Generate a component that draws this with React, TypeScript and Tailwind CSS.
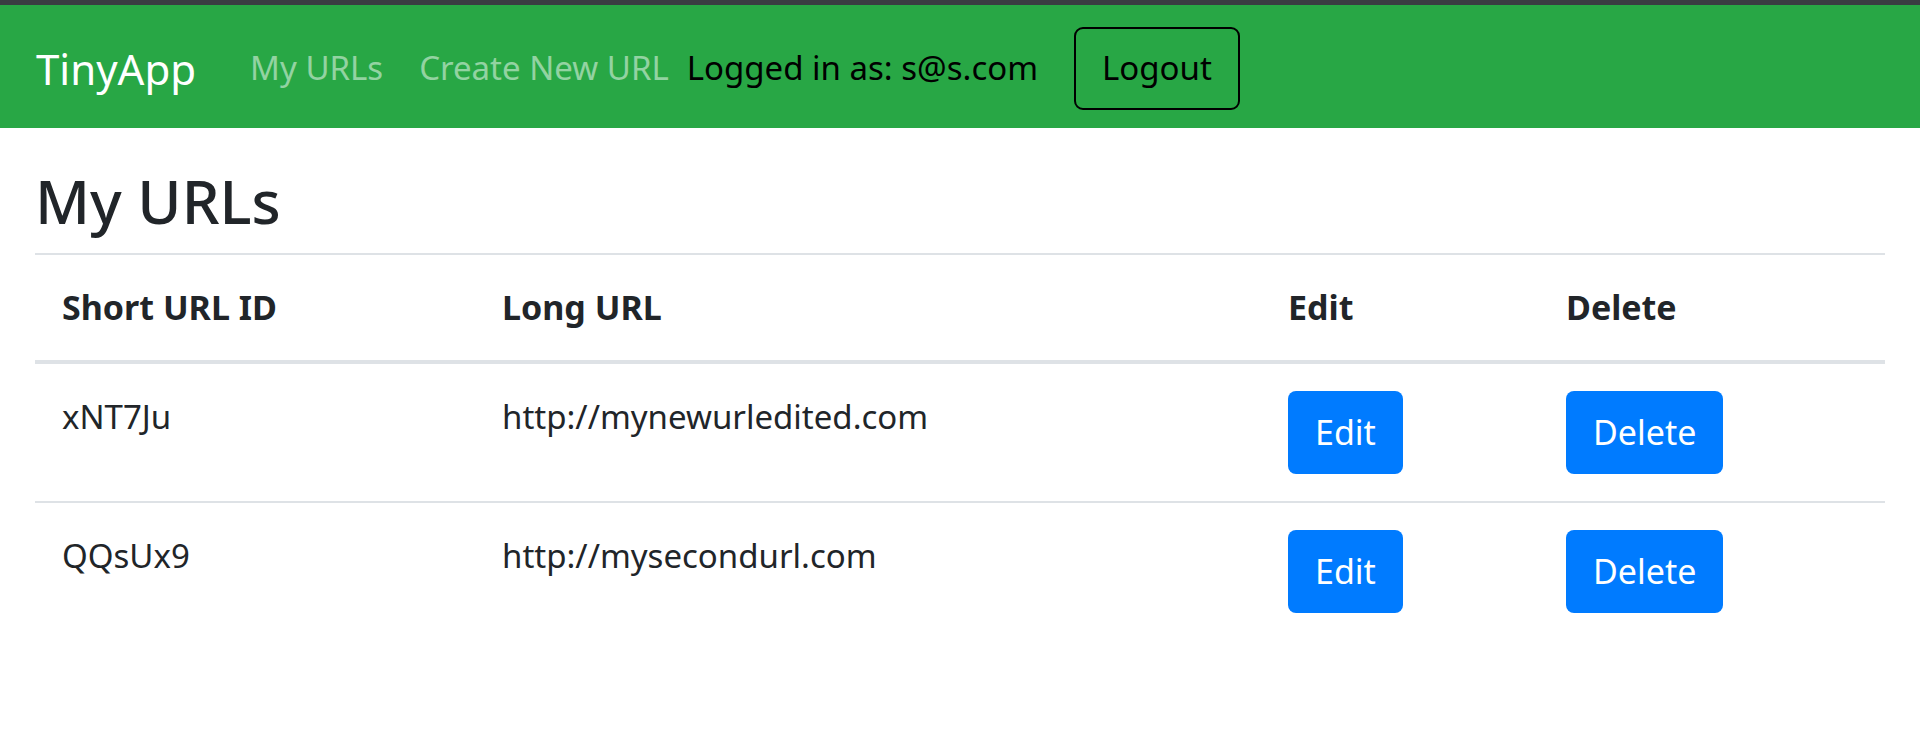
import React from "react";

const rows = [
    { id: "xNT7Ju", url: "http://mynewurledited.com" },
    { id: "QQsUx9", url: "http://mysecondurl.com" },
];

export default function App() {
    return (
        <div className="min-h-[752px] bg-white text-[#212529] font-['Noto_Sans','Open_Sans',sans-serif]">
            <div className="h-[5px] bg-[#3a3d42]" />
            <nav className="flex h-[123px] items-center bg-[#28a745] px-[36px] pt-[3px]">
                <a className="mr-[36px] text-[42px] text-white">TinyApp</a>
                <a className="px-[18px] text-[33px] text-white/50">My URLs</a>
                <a className="px-[18px] text-[33px] text-white/50">Create New URL</a>
                <span className="text-[33px] text-black">Logged in as: s@s.com</span>
                <button className="ml-[36px] h-[83px] rounded-[9px] border-2 border-black px-[26px] text-[33px] text-black">
                    Logout
                </button>
            </nav>
            <main className="px-[35px]">
                <h1 className="mt-[37px] mb-[16px] text-[60px] leading-[1.2] font-medium">My URLs</h1>
                <table className="w-full border-collapse text-left text-[33px]">
                    <thead>
                        <tr className="border-t-2 border-b-[4px] border-[#dee2e6]">
                            <th className="w-[440px] px-[27px] py-[27px] text-[34px] font-bold">Short URL ID</th>
                            <th className="w-[786px] px-[27px] py-[27px] text-[34px] font-bold">Long URL</th>
                            <th className="w-[278px] px-[27px] py-[27px] text-[34px] font-bold">Edit</th>
                            <th className="px-[27px] py-[27px] text-[34px] font-bold">Delete</th>
                        </tr>
                    </thead>
                    <tbody>
                        {rows.map((r) => (
                            <tr key={r.id} className="border-t-2 border-[#dee2e6] first:border-t-0 align-top">
                                <td className="px-[27px] py-[28px]">{r.id}</td>
                                <td className="px-[27px] py-[28px]">{r.url}</td>
                                <td className="px-[27px] py-[27px]">
                                    <button className="h-[83px] rounded-[8px] bg-[#007bff] px-[27px] text-[34px] text-white">Edit</button>
                                </td>
                                <td className="px-[27px] py-[27px]">
                                    <button className="h-[83px] rounded-[8px] bg-[#007bff] px-[27px] text-[34px] text-white">Delete</button>
                                </td>
                            </tr>
                        ))}
                    </tbody>
                </table>
            </main>
        </div>
    );
}
